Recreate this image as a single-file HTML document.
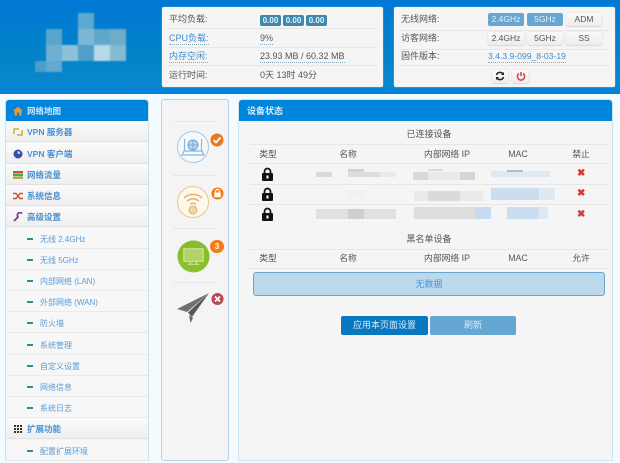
<!DOCTYPE html>
<html><head><meta charset="utf-8">
<style>
html,body{margin:0;padding:0}
body{width:620px;height:460px;overflow:hidden;position:relative;background:#f3fbfe;font-family:"Liberation Sans","Noto Sans CJK SC",sans-serif;font-size:9px;color:#555}
#wrap{position:absolute;left:0;top:0;width:620px;height:460px;filter:blur(.35px)}
.a{position:absolute}
#hd{left:0;top:0;width:620px;height:94px;background:linear-gradient(#0078d6 0,#0383c8 60%,#0a86cf 88%,#0382dc 100%)}
.box{background:#f5f5f5;border-radius:2px;box-shadow:0 0 1px #cde}
.ln{height:1px;background:#e6e6e6}
.t{position:absolute;white-space:nowrap;line-height:12px}
.lk{color:#3f8cd0;border-bottom:1px dotted #8ab}
.bd{position:absolute;width:21px;height:11px;background:#3f88ad;border-radius:2px;color:#e8f2f8;font-size:8px;font-weight:bold;text-align:center;line-height:11px}
.btn{position:absolute;height:13px;line-height:13px;border-radius:2px;text-align:center;font-size:8.5px;background:linear-gradient(#f9f9f9,#ececec);box-shadow:0 0 1px #bbb,0 1px 1px #ddd;color:#555}
.on{background:#68a5d0;color:#e4f0f8;box-shadow:none}
#nav{left:6px;top:100px;width:142px;height:360px;background:#f5f5f5;box-shadow:0 0 0 1px #cfe0ea;border-radius:3px 3px 0 0}
.it{position:absolute;left:0;width:142px;height:21px;line-height:23px;font-size:8.5px;color:#4a90d0;white-space:nowrap;background:linear-gradient(#fbfbfb,#eeeeee);border-bottom:1px solid #e2e2e2;box-sizing:border-box}
.it b{position:absolute;left:21px;top:0;font-weight:bold}
.sub{background:#f7f7f7;border-bottom:1px solid #eaeaea;color:#5a9bd4;font-size:8px}
.sub i{position:absolute;left:21px;top:10px;width:6px;height:2px;background:#2a8a9a}
.sub span{position:absolute;left:34px;top:0}
.ic{position:absolute;left:7px;top:6px;width:10px;height:10px}
#st{left:162px;top:100px;width:66px;height:360px;background:#f4f4f4;box-shadow:0 0 0 1px #b9d3e6;border-radius:2px}
#mn{left:239px;top:100px;width:373px;height:360px;background:#f5f5f5;box-shadow:0 0 0 1px #cfe2ee;border-radius:3px 3px 0 0}
.bl{position:absolute;background:#cfcfcf}
.bb{position:absolute;background:#c6dcf0}
.th{position:absolute;font-size:8.8px;color:#555;white-space:nowrap;line-height:12px;transform:translateX(-50%)}
.x{position:absolute;left:338px;color:#d9383a;font-size:10px;font-weight:bold;line-height:12px}
</style></head><body>
<div id="wrap">
<div class="a" id="hd"></div>

<!-- blurred logo -->
<div style="filter:blur(.7px)">
<div class="a" style="left:78px;top:13px;width:16px;height:16px;background:#5ea9d2"></div>
<div class="a" style="left:46px;top:29px;width:16px;height:16px;background:#5aa5cc"></div>
<div class="a" style="left:78px;top:29px;width:16px;height:16px;background:#7cb8d6"></div>
<div class="a" style="left:94px;top:29px;width:16px;height:16px;background:#5ea8cc"></div>
<div class="a" style="left:110px;top:29px;width:16px;height:16px;background:#6eacc9"></div>
<div class="a" style="left:46px;top:45px;width:16px;height:16px;background:#6eb0d2"></div>
<div class="a" style="left:62px;top:45px;width:16px;height:16px;background:#8fc0da"></div>
<div class="a" style="left:78px;top:45px;width:16px;height:16px;background:#4f9fc8"></div>
<div class="a" style="left:94px;top:45px;width:16px;height:16px;background:#b8d8e8"></div>
<div class="a" style="left:110px;top:45px;width:16px;height:16px;background:#86b9d4"></div>
<div class="a" style="left:35px;top:61px;width:11px;height:11px;background:#4a9fca"></div>
<div class="a" style="left:46px;top:61px;width:16px;height:11px;background:#62aad0"></div>
</div>

<!-- info box 1 -->
<div class="a box" style="left:162px;top:7px;width:221px;height:80px">
<span class="t" style="left:7px;top:6px">平均负载:</span>
<span class="bd" style="left:98px;top:8px">0.00</span><span class="bd" style="left:121px;top:8px">0.00</span><span class="bd" style="left:144px;top:8px">0.00</span>
<div class="a ln" style="left:6px;top:21px;width:209px"></div>
<span class="t lk" style="left:7px;top:25px">CPU负载:</span><span class="t lk" style="left:98px;top:25px;color:#555">9%</span>
<div class="a ln" style="left:6px;top:40px;width:209px"></div>
<span class="t lk" style="left:7px;top:43px">内存空闲:</span><span class="t lk" style="left:98px;top:43px;color:#555">23.93 MB / 60.32 MB</span>
<div class="a ln" style="left:6px;top:58px;width:209px"></div>
<span class="t" style="left:7px;top:62px">运行时间:</span><span class="t" style="left:98px;top:62px">0天 13时 49分</span>
</div>

<!-- info box 2 -->
<div class="a box" style="left:394px;top:7px;width:221px;height:80px">
<span class="t" style="left:7px;top:6px">无线网络:</span>
<div class="btn on" style="left:94px;top:6px;width:36px">2.4GHz</div>
<div class="btn on" style="left:133px;top:6px;width:36px">5GHz</div>
<div class="btn" style="left:172px;top:6px;width:36px">ADM</div>
<div class="a ln" style="left:6px;top:23px;width:209px"></div>
<span class="t" style="left:7px;top:25px">访客网络:</span>
<div class="btn" style="left:94px;top:25px;width:36px">2.4GHz</div>
<div class="btn" style="left:133px;top:25px;width:36px">5GHz</div>
<div class="btn" style="left:172px;top:25px;width:36px">SS</div>
<div class="a ln" style="left:6px;top:42px;width:209px"></div>
<span class="t" style="left:7px;top:43px">固件版本:</span>
<span class="t lk" style="left:94px;top:43px;font-size:8.6px">3.4.3.9-099_8-03-19</span>
<div class="a ln" style="left:6px;top:58px;width:209px"></div>
<div class="btn" style="left:98px;top:63px;width:16px;height:13px"></div>
<div class="btn" style="left:118px;top:63px;width:17px;height:13px"></div>
<svg class="a" style="left:101px;top:64px" width="10" height="10" viewBox="0 0 10 10"><path d="M1.5 4A3.6 3.6 0 0 1 8 3M8.5 6A3.6 3.6 0 0 1 2 7" fill="none" stroke="#222" stroke-width="1.5"/><path d="M9 1V4H6ZM1 9V6H4Z" fill="#222"/></svg>
<svg class="a" style="left:122px;top:64px" width="10" height="10" viewBox="0 0 10 10"><path d="M3 2.5A3.6 3.6 0 1 0 7 2.5M5 1V5" fill="none" stroke="#d83a3a" stroke-width="1.5"/></svg>
</div>

<!-- nav -->
<div class="a" id="nav">
<div class="it" style="top:0;background:#0085dd;color:#cfe8f8;border:0;height:21px;border-radius:3px 3px 0 0"><b>网络地图</b>
<svg class="ic" viewBox="0 0 10 10"><path d="M5 .5L10 5H8.5V9.5H6V6.5H4V9.5H1.5V5H0Z" fill="#e89a3c"/></svg></div>
<div class="it" style="top:21px"><b>VPN 服务器</b><svg class="ic" viewBox="0 0 10 10"><path d="M1 7V2H6M9 3V8H4" fill="none" stroke="#c8b82a" stroke-width="1.5"/></svg></div>
<div class="it" style="top:43px"><b>VPN 客户端</b><svg class="ic" viewBox="0 0 10 10"><circle cx="5" cy="5" r="4.5" fill="#3a4fa8"/><path d="M4 2.5H7V5H5Z" fill="#c8d0ee"/></svg></div>
<div class="it" style="top:64px"><b>网络流量</b><svg class="ic" viewBox="0 0 10 10"><rect y="1" width="10" height="2.5" fill="#c94f3a"/><rect y="4" width="10" height="2.5" fill="#4aa84f"/><rect y="7" width="10" height="2" fill="#c9a23a"/></svg></div>
<div class="it" style="top:85px"><b>系统信息</b><svg class="ic" viewBox="0 0 10 10"><path d="M0 2.5H3L7 7.5H10M0 7.5H3L7 2.5H10" fill="none" stroke="#c8552a" stroke-width="1.4"/></svg></div>
<div class="it" style="top:106px"><b>高级设置</b><svg class="ic" viewBox="0 0 10 10"><path d="M1 9L5.5 4.5M5 5A2.5 2.5 0 0 1 9 1.5" fill="none" stroke="#7a3a8a" stroke-width="1.8"/></svg></div>
<div class="it sub" style="top:128px"><i></i><span>无线 2.4GHz</span></div>
<div class="it sub" style="top:149px"><i></i><span>无线 5GHz</span></div>
<div class="it sub" style="top:170px"><i></i><span>内部网络 (LAN)</span></div>
<div class="it sub" style="top:191px"><i></i><span>外部网络 (WAN)</span></div>
<div class="it sub" style="top:212px"><i></i><span>防火墙</span></div>
<div class="it sub" style="top:234px"><i></i><span>系统管理</span></div>
<div class="it sub" style="top:255px"><i></i><span>自定义设置</span></div>
<div class="it sub" style="top:276px"><i></i><span>网络信息</span></div>
<div class="it sub" style="top:297px"><i></i><span>系统日志</span></div>
<div class="it" style="top:318px"><b>扩展功能</b><svg class="ic" viewBox="0 0 10 10"><path d="M1 1h2v2H1zM4 1h2v2H4zM7 1h2v2H7zM1 4h2v2H1zM4 4h2v2H4zM7 4h2v2H7zM1 7h2v2H1zM4 7h2v2H4zM7 7h2v2H7z" fill="#333"/></svg></div>
<div class="it sub" style="top:340px"><i></i><span>配置扩展环境</span></div>
</div>

<!-- status column -->
<div class="a" id="st">
<div class="a ln" style="left:13px;top:21px;width:41px"></div>
<svg class="a" style="left:14px;top:30px" width="36" height="36" viewBox="0 0 36 36"><circle cx="17" cy="17" r="15.5" fill="#f6f9fc" stroke="#a8c8e6" stroke-width="1"/><path d="M8.5 9V21M25.5 9V21M6 25H28L26 21H8Z" fill="none" stroke="#8ab6de" stroke-width="1.2"/><circle cx="17" cy="15" r="5" fill="#bcd8f0" stroke="#6aa3d8"/><path d="M12 15H22M17 10V20" stroke="#6aa3d8" stroke-width=".8"/></svg>
<svg class="a" style="left:48px;top:33px" width="14" height="14" viewBox="0 0 14 14"><circle cx="7" cy="7" r="6.5" fill="#e8781e"/><path d="M3.5 7L6 9.5L10.5 4.5" fill="none" stroke="#fff" stroke-width="1.8"/></svg>
<div class="a ln" style="left:11px;top:75px;width:43px"></div>
<svg class="a" style="left:14px;top:85px" width="36" height="36" viewBox="0 0 36 36"><circle cx="17" cy="17" r="15.5" fill="#fdf8ee" stroke="#eec48a" stroke-width="1"/><path d="M8 13A13 13 0 0 1 26 13M11 16.5A8 8 0 0 1 23 16.5M14 19.5A4 4 0 0 1 20 19.5" fill="none" stroke="#e8a860" stroke-width="1.3"/><circle cx="17" cy="25" r="4" fill="#ecd9a0" stroke="#e0b060"/></svg>
<svg class="a" style="left:49px;top:87px" width="13" height="13" viewBox="0 0 14 14"><circle cx="7" cy="7" r="6.5" fill="#f07a1c"/><rect x="3.5" y="6" width="7" height="5" fill="#fff"/><path d="M5 6V4.500A2 2 0 0 1 9 4.500V6" fill="none" stroke="#fff" stroke-width="1.1"/></svg>
<div class="a ln" style="left:11px;top:128px;width:43px"></div>
<svg class="a" style="left:15px;top:140px" width="33" height="33" viewBox="0 0 34 34"><defs><linearGradient id="g" x1="0" y1="0" x2="0" y2="1"><stop offset="0" stop-color="#86bb2c"/><stop offset="1" stop-color="#8cc230"/></linearGradient></defs><circle cx="17" cy="17" r="16.5" fill="url(#g)"/><rect x="7" y="9" width="20" height="13" fill="#b2d266" stroke="#d6e8a8"/><path d="M11 25H23M14 22V25M20 22V25" stroke="#d6e8a8"/></svg>
<div class="a" style="left:48px;top:140px;width:14px;height:13px;border-radius:7px;background:#f57c14;color:#fff;font-size:8px;font-weight:bold;text-align:center;line-height:13px">3</div>
<div class="a ln" style="left:11px;top:182px;width:43px"></div>
<svg class="a" style="left:16px;top:193px;overflow:visible" width="32" height="31" viewBox="0 0 32 31"><path d="M-1 16L31 0L9 19Z" fill="#707070"/><path d="M31 0L14 24L10 19.5Z" fill="#585858"/><path d="M11 22L15 25L12.5 30Z" fill="#666"/></svg>
<svg class="a" style="left:49px;top:192px" width="13" height="14" viewBox="0 0 14 14"><circle cx="7" cy="7" r="6.5" fill="#b84a52"/><path d="M4.3 4.3L9.7 9.7M9.7 4.3L4.3 9.7" stroke="#fff" stroke-width="1.8"/></svg>
</div>

<!-- main -->
<div class="a" id="mn">
<div class="a" style="left:0;top:0;width:373px;height:21px;background:#0085dd;border-radius:3px 3px 0 0"></div>
<span class="t" style="left:8px;top:5px;color:#d6ecfa;font-weight:bold;font-size:9px">设备状态</span>
<span class="th" style="left:190px;top:28px;font-size:9px">已连接设备</span>
<div class="a ln" style="left:11px;top:44px;width:358px"></div>
<span class="th" style="left:29px;top:48px">类型</span><span class="th" style="left:109px;top:48px">名称</span><span class="th" style="left:208px;top:48px">内部网络 IP</span><span class="th" style="left:279px;top:48px">MAC</span><span class="th" style="left:342px;top:48px">禁止</span>
<div class="a ln" style="left:11px;top:63px;width:358px"></div>
<div class="a ln" style="left:11px;top:84px;width:358px"></div>
<div class="a ln" style="left:11px;top:104px;width:358px"></div>

<svg class="a" style="left:22px;top:67px" width="13" height="14" viewBox="0 0 13 14"><path d="M3.5 6V4.5A3 3 0 0 1 9.5 4.5V6" fill="none" stroke="#111" stroke-width="1.7"/><rect x="1" y="6" width="11" height="8" rx="1" fill="#111"/><rect x="5.5" y="8.5" width="2" height="3" fill="#fff"/></svg>
<svg class="a" style="left:22px;top:87px" width="13" height="14" viewBox="0 0 13 14"><path d="M3.5 6V4.5A3 3 0 0 1 9.5 4.5V6" fill="none" stroke="#111" stroke-width="1.7"/><rect x="1" y="6" width="11" height="8" rx="1" fill="#111"/><rect x="5.5" y="8.5" width="2" height="3" fill="#fff"/></svg>
<svg class="a" style="left:22px;top:107px" width="13" height="14" viewBox="0 0 13 14"><path d="M3.5 6V4.5A3 3 0 0 1 9.5 4.5V6" fill="none" stroke="#111" stroke-width="1.7"/><rect x="1" y="6" width="11" height="8" rx="1" fill="#111"/><rect x="5.5" y="8.5" width="2" height="3" fill="#fff"/></svg>

<!-- redacted blocks row 1 -->
<div class="bl" style="left:77px;top:72px;width:16px;height:5px;opacity:.75"></div>
<div class="bl" style="left:109px;top:69px;width:16px;height:3px;opacity:.9"></div>
<div class="bl" style="left:109px;top:72px;width:32px;height:5px;opacity:.65"></div>
<div class="bl" style="left:141px;top:72px;width:16px;height:5px;opacity:.3"></div>
<div class="bl" style="left:174px;top:72px;width:15px;height:8px;opacity:.75"></div>
<div class="bl" style="left:189px;top:72px;width:32px;height:8px;opacity:.3"></div>
<div class="bl" style="left:189px;top:69px;width:15px;height:2px;opacity:.7"></div>
<div class="bl" style="left:221px;top:72px;width:15px;height:8px;opacity:.85"></div>
<div class="bb" style="left:252px;top:71px;width:59px;height:6px;opacity:.45"></div>
<div class="bb" style="left:268px;top:70px;width:16px;height:2px;background:#b0bcc8"></div>
<!-- row 2 -->
<div class="bl" style="left:109px;top:90px;width:16px;height:8px;opacity:.1"></div>
<div class="bl" style="left:175px;top:91px;width:14px;height:10px;opacity:.3"></div>
<div class="bl" style="left:189px;top:91px;width:32px;height:10px;opacity:.7"></div>
<div class="bl" style="left:221px;top:91px;width:23px;height:10px;opacity:.3"></div>
<div class="bb" style="left:252px;top:88px;width:48px;height:12px;opacity:.9"></div>
<div class="bb" style="left:300px;top:88px;width:16px;height:12px;opacity:.45"></div>
<!-- row 3 -->
<div class="bl" style="left:77px;top:109px;width:32px;height:10px;opacity:.55"></div>
<div class="bl" style="left:109px;top:109px;width:16px;height:10px;opacity:1"></div>
<div class="bl" style="left:125px;top:109px;width:32px;height:10px;opacity:.55"></div>
<div class="bl" style="left:175px;top:107px;width:61px;height:12px;opacity:.65"></div>
<div class="bb" style="left:236px;top:107px;width:16px;height:12px"></div>
<div class="bb" style="left:268px;top:107px;width:32px;height:12px;opacity:.9"></div>
<div class="bb" style="left:300px;top:107px;width:9px;height:12px;opacity:.5"></div>

<span class="x" style="top:68px">✖</span><span class="x" style="top:88px">✖</span><span class="x" style="top:109px">✖</span>

<span class="th" style="left:190px;top:133px;font-size:9px">黑名单设备</span>
<div class="a ln" style="left:11px;top:149px;width:358px"></div>
<span class="th" style="left:29px;top:152px">类型</span><span class="th" style="left:109px;top:152px">名称</span><span class="th" style="left:208px;top:152px">内部网络 IP</span><span class="th" style="left:279px;top:152px">MAC</span><span class="th" style="left:342px;top:152px">允许</span>
<div class="a ln" style="left:11px;top:168px;width:358px"></div>
<div class="a" style="left:14px;top:172px;width:350px;height:22px;background:#bcd9ec;border:1px solid #6ca5d0;border-radius:3px;text-align:center;line-height:22px;color:#4a94d4;font-size:9px">无数据</div>
<div class="a" style="left:102px;top:216px;width:87px;height:19px;background:#0a78c0;border-radius:2px;color:#d8ecf8;text-align:center;line-height:19px;font-size:9px">应用本页面设置</div>
<div class="a" style="left:191px;top:216px;width:86px;height:19px;background:#66a6d2;border-radius:2px;color:#d8ecf8;text-align:center;line-height:19px;font-size:9px">刷新</div>
</div>
</div>
</body></html>
